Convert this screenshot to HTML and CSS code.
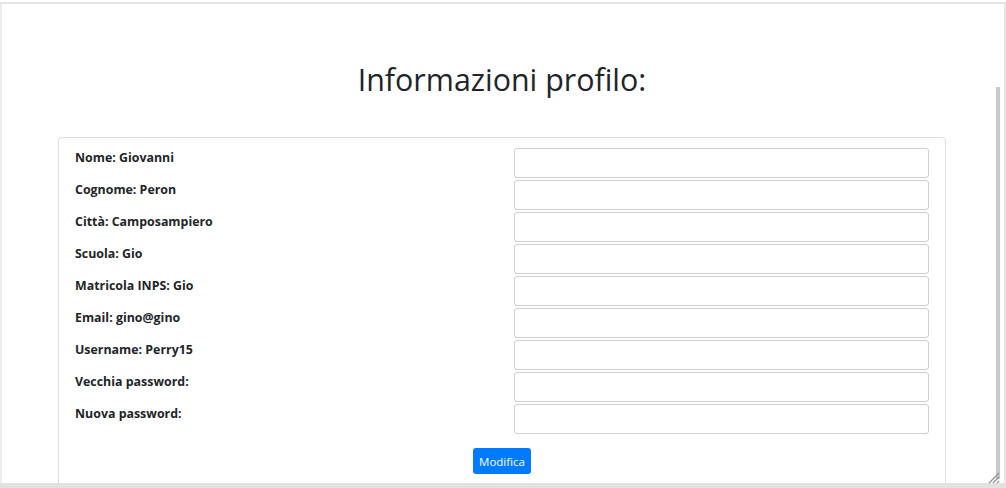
FILE: index.html
```html
<!DOCTYPE html>
<html lang="it">
<head>
<meta charset="utf-8">
<title>Informazioni profilo</title>
<link rel="stylesheet" href="styles.css">
</head>
<body>
<div class="window">
  <div class="viewport">
    <div class="page">
      <h1 class="title">Informazioni profilo:</h1>
      <div class="card">
        <form class="form">
          <div class="row"><label class="lbl">Nome: Giovanni</label><input class="field" type="text"></div>
          <div class="row"><label class="lbl">Cognome: Peron</label><input class="field" type="text"></div>
          <div class="row"><label class="lbl">Città: Camposampiero</label><input class="field" type="text"></div>
          <div class="row"><label class="lbl">Scuola: Gio</label><input class="field" type="text"></div>
          <div class="row"><label class="lbl">Matricola INPS: Gio</label><input class="field" type="text"></div>
          <div class="row"><label class="lbl">Email: gino@gino</label><input class="field" type="text"></div>
          <div class="row"><label class="lbl">Username: Perry15</label><input class="field" type="text"></div>
          <div class="row"><label class="lbl">Vecchia password:</label><input class="field" type="password"></div>
          <div class="row"><label class="lbl">Nuova password:</label><input class="field" type="password"></div>
          <div class="actions"><button class="btn" type="button">Modifica</button></div>
        </form>
      </div>
    </div>
    <div class="scrollbar"><div class="thumb"></div></div>
  </div>
  <div class="bottom-bar"></div>
  <svg class="grip" width="12" height="12" viewBox="0 0 12 12">
    <path d="M11 1 L1 11 M11 5 L5 11 M11 9 L9 11" stroke="#8f8f8f" stroke-width="1.2" fill="none"/>
  </svg>
</div>
</body>
</html>
```
FILE: styles.css
```css
html, body {
  margin: 0;
  padding: 0;
  background: #fff;
  overflow: hidden;
}
body {
  width: 1006px;
  height: 488px;
  font-family: "Open Sans", "Noto Sans", sans-serif;
  color: #212529;
}
.window {
  position: relative;
  box-sizing: border-box;
  width: 1006px;
  height: 488px;
  padding-top: 2px;
  display: flex;
  flex-direction: column;
}
.viewport {
  flex: 1;
  display: flex;
  border-top: 2px solid #e6e6e6;
  border-left: 2px solid #ececec;
  border-right: 2px solid #e6e6e6;
  overflow: hidden;
}
.page {
  flex: 1;
  overflow: hidden;
  padding: 0 50px 0 56px;
}
.title {
  margin: 51px 0 0;
  height: 50px;
  text-align: center;
  font-weight: 400;
  font-size: 30.4px;
  line-height: 50px;
  color: #212529;
}
.card {
  margin-top: 32px;
  border: 1px solid #dfdfdf;
  border-radius: 4px;
  padding: 10px 16px 20px 16px;
}
.form {
  display: flex;
  flex-direction: column;
  gap: 2px;
}
.row {
  display: grid;
  grid-template-columns: 439px 415px;
  align-items: start;
}
.lbl {
  font-weight: 700;
  font-size: 12.4px;
  line-height: 18px;
  padding-top: 1px;
  color: #212529;
}
.field {
  box-sizing: border-box;
  height: 30px;
  width: 415px;
  margin: 0;
  border: 1px solid #cfcfcf;
  border-radius: 3px;
  background: #fff;
}
.actions {
  display: flex;
  justify-content: center;
  padding-top: 12px;
}
.btn {
  background: #007bff;
  color: #fff;
  border: none;
  border-radius: 3px;
  height: 26px;
  padding: 0 6px;
  font-family: "Open Sans", "Noto Sans", sans-serif;
  font-size: 11.5px;
}
.scrollbar {
  width: 8px;
  flex: none;
  background: #fff;
  padding-top: 83px;
  box-sizing: border-box;
}
.thumb {
  width: 4px;
  height: 392px;
  background: #c9c9c9;
}
.bottom-bar {
  height: 5px;
  background: #e2e2e2;
  flex: none;
}
.grip {
  position: absolute;
  right: 6px;
  bottom: 4px;
}
```
